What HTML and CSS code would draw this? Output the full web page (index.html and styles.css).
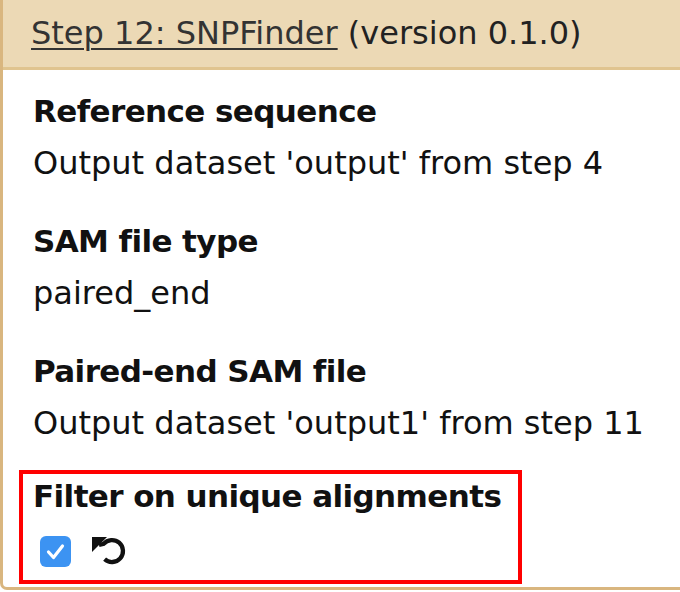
FILE: index.html
```html
<!DOCTYPE html>
<html>
<head>
<meta charset="utf-8">
<link rel="stylesheet" href="styles.css">
</head>
<body>
<div class="panel">
  <div class="panel-header"><a class="step-link" href="#">Step 12: SNPFinder</a> (version 0.1.0)</div>
  <div class="panel-body">
    <div class="row">
      <div class="label">Reference sequence</div>
      <div class="value">Output dataset 'output' from step 4</div>
    </div>
    <div class="row">
      <div class="label">SAM file type</div>
      <div class="value">paired_end</div>
    </div>
    <div class="row">
      <div class="label">Paired-end SAM file</div>
      <div class="value">Output dataset 'output1' from step 11</div>
    </div>
    <div class="row highlight">
      <div class="label label-tight">Filter on unique alignments</div>
      <div class="controls">
        <span class="checkbox">
          <svg width="31" height="31" viewBox="0 0 31 31"><rect x="0" y="0" width="31" height="31" rx="6" fill="#3c93f2"/><path d="M8.5 16 L13.5 21.5 L22.5 10" fill="none" stroke="#fff" stroke-width="3.2" stroke-linecap="round" stroke-linejoin="round"/></svg>
        </span>
        <span class="undo">
          <svg width="34" height="28" viewBox="0 0 34 28"><polygon points="0,0 15,0 0,15" fill="#111"/><path d="M7 8 L11.6 6.9 A11 11 0 1 1 12.6 22.2" fill="none" stroke="#111" stroke-width="4.3"/></svg>
        </span>
      </div>
    </div>
  </div>
</div>
</body>
</html>
```
FILE: styles.css
```css
html, body {
  margin: 0;
  padding: 0;
  background: #ffffff;
}
body {
  font-family: "DejaVu Sans", "Liberation Sans", sans-serif;
  color: #111111;
  width: 680px;
  height: 592px;
  overflow: hidden;
}
.panel {
  width: 680px;
  height: 590px;
  box-sizing: border-box;
  border-left: 3px solid #d9b67f;
  border-bottom: 3px solid #d9b67f;
  border-bottom-left-radius: 7px;
  background: #ffffff;
  overflow: hidden;
}
.panel-header {
  height: 67px;
  line-height: 67px;
  background: #ecd9b5;
  border-bottom: 3px solid #e0c48f;
  padding-left: 28px;
  font-size: 32px;
  color: #222222;
  white-space: nowrap;
}
.step-link {
  color: #333333;
  text-decoration: underline;
  text-decoration-thickness: 2px;
  text-underline-offset: 4px;
}
.panel-body {
  padding-top: 15px;
}
.row {
  padding-left: 30px;
  margin-bottom: 26px;
}
.label {
  font-size: 31px;
  font-weight: bold;
  letter-spacing: -0.6px;
  line-height: 52px;
  white-space: nowrap;
}
.value {
  font-size: 32px;
  line-height: 52px;
  white-space: nowrap;
}
.row.highlight {
  margin: -5px 0 0 16px;
  width: 503px;
  box-sizing: border-box;
  border: 4px solid #ff0000;
  padding-left: 10px;
  height: 114px;
}
.label-tight {
  line-height: 44px;
}
.controls {
  display: flex;
  align-items: center;
  gap: 21px;
  height: 62px;
  padding-top: 4px;
  box-sizing: border-box;
  padding-left: 7px;
}
.checkbox, .undo {
  display: flex;
}
```
